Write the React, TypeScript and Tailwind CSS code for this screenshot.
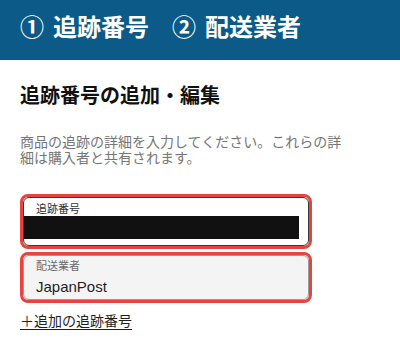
export default function App() {
  return (
    <div className="min-h-[364px] w-[400px] bg-white font-['Liberation_Sans','Noto_Sans_CJK_JP',sans-serif] text-[#1f1f1f]">
      <header className="flex h-[60px] items-center bg-[#0b5a87] pb-[5px] pl-[20px] text-[24px] font-bold leading-none text-white">
        <span>①</span>
        <span className="ml-[9px]">追跡番号</span>
        <span className="ml-[23px]">②</span>
        <span className="ml-[9px]">配送業者</span>
      </header>

      <main className="px-[20px] pt-[22px]">
        <h1 className="text-[20px] font-bold leading-[28px] text-[#111]">追跡番号の追加・編集</h1>
        <p className="mt-[24px] w-[330px] text-[14px] leading-[16px] text-[#767676]">
          商品の追跡の詳細を入力してください。これらの詳細は購入者と共有されます。
        </p>

        <div className="mt-[28px] w-[292px] rounded-[8px] border-[3px] border-[#e5443f]">
          <div className="rounded-[6px] border border-[#3a3a3a] bg-white pb-[6px] pt-[4px]">
            <div className="pl-[12px] text-[11px] leading-[14px] text-[#333]">追跡番号</div>
            <div className="h-[23px] w-[275px] bg-[#111]" />
          </div>
        </div>

        <div className="mt-[3px] w-[292px] rounded-[8px] border-[3px] border-[#e5443f]">
          <div className="rounded-[6px] border border-[#9a9a9a] bg-[#f4f4f4] pb-[2px] pt-[3px]">
            <div className="pl-[12px] text-[11px] leading-[14px] text-[#6b6b6b]">配送業者</div>
            <div className="mt-[4px] pl-[12px] text-[15px] leading-[20px] text-[#1f1f1f]">JapanPost</div>
          </div>
        </div>

        <a href="#" className="mt-[8px] inline-block text-[14px] leading-[20px] text-[#1f1f1f] underline underline-offset-[3px]">
          ＋追加の追跡番号
        </a>
      </main>
    </div>
  );
}
